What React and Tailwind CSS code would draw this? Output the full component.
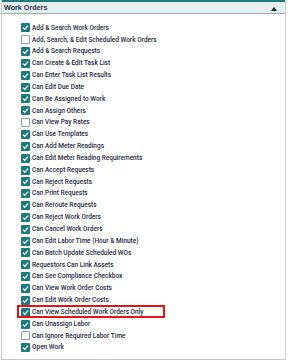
const perms = [
  ["Add & Search Work Orders", true],
  ["Add, Search, & Edit Scheduled Work Orders", false],
  ["Add & Search Requests", true],
  ["Can Create & Edit Task List", true],
  ["Can Enter Task List Results", true],
  ["Can Edit Due Date", true],
  ["Can Be Assigned to Work", true],
  ["Can Assign Others", true],
  ["Can View Pay Rates", false],
  ["Can Use Templates", true],
  ["Can Add Meter Readings", true],
  ["Can Edit Meter Reading Requirements", true],
  ["Can Accept Requests", true],
  ["Can Reject Requests", true],
  ["Can Print Requests", true],
  ["Can Reroute Requests", true],
  ["Can Reject Work Orders", true],
  ["Can Cancel Work Orders", true],
  ["Can Edit Labor Time (Hour & Minute)", true],
  ["Can Batch Update Scheduled WOs", true],
  ["Requestors Can Link Assets", true],
  ["Can See Compliance Checkbox", true],
  ["Can View Work Order Costs", true],
  ["Can Edit Work Order Costs", true],
  ["Can View Scheduled Work Orders Only", true],
  ["Can Unassign Labor", true],
  ["Can Ignore Required Labor Time", false],
  ["Open Work", true],
];

function Box({ checked }) {
  if (!checked) {
    return <span className="w-[9px] h-[9px] shrink-0 border border-[#8fa3a8] bg-white rounded-[1px]" />;
  }
  return (
    <span className="w-[9px] h-[9px] shrink-0 bg-[#1c7a7d] rounded-[1px] flex items-center justify-center">
      <svg width="7" height="7" viewBox="0 0 10 10">
        <path d="M1.5 5.2 L4 7.6 L8.6 2.4" fill="none" stroke="white" strokeWidth="1.8" />
      </svg>
    </span>
  );
}

export default function App() {
  return (
    <div className="w-[288px] h-[362px] bg-white">
      <div className="ml-px w-[285px] h-[360px] border-x border-b border-[#c8c8c8]">
        <div className="h-[14px] border-t-2 border-t-[#1e7b7e] border-b border-b-[#8fb4b5] bg-[#e6f0f0] flex items-center justify-between pl-[2px] pr-[8px]">
          <span className="text-[7.2px] leading-none font-bold text-[#243447]" style={{ fontFamily: "'Liberation Sans', Arial, sans-serif" }}>
            Work Orders
          </span>
          <svg width="6" height="4" viewBox="0 0 6 4" className="mt-[2px]">
            <path d="M0 4 L3 0 L6 4 Z" fill="#222" />
          </svg>
        </div>
        <div className="pt-[8px] pl-[19px]" style={{ fontFamily: "Roboto, 'Liberation Sans', Arial, sans-serif" }}>
          {perms.map(([label, checked], i) => (
            <div key={i} className="relative h-[11.85px] flex items-center gap-[2px]">
              {i === 24 && (
                <span className="absolute left-[-4px] top-[-1px] w-[148px] h-[13px] border-2 border-[#e0141a]" />
              )}
              <Box checked={checked} />
              <span className="text-[6.5px] leading-none font-medium text-[#1f2a3d] whitespace-nowrap">{label}</span>
            </div>
          ))}
        </div>
      </div>
    </div>
  );
}
